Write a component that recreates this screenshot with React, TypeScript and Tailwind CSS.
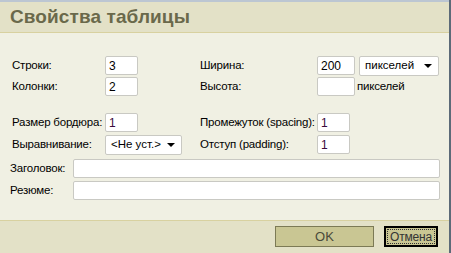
import React from "react";

function Field({ value = "", w = "w-[33px]", purple = false }: { value?: string; w?: string; purple?: boolean }) {
  return (
    <div
      className={`${w} h-[19px] bg-white border border-[#c9c9c3] rounded-[2px] flex items-center px-[3px] text-[12px] ${
        purple ? "text-[#3a0a3a]" : "text-black"
      }`}
    >
      {value}
    </div>
  );
}

function Select({ value, w }: { value: string; w: string }) {
  return (
    <div className={`${w} h-[20px] bg-white border border-[#c9c9c3] rounded-[2px] flex items-center justify-between pl-[5px] pr-[6px] text-[11.5px] text-black whitespace-nowrap`}>
      <span>{value}</span>
      <span className="w-0 h-0 border-l-[4px] border-r-[4px] border-t-[4px] border-l-transparent border-r-transparent border-t-black" />
    </div>
  );
}

const label = "text-[11.5px] whitespace-nowrap tracking-[-0.2px]";

export default function App() {
  return (
    <div className="w-[451px] h-[253px] flex bg-[#f0f0e3] text-black" style={{ fontFamily: "'Liberation Sans', Arial, sans-serif" }}>
      <div className="flex-1 flex flex-col">
        {/* верхняя полоска окна */}
        <div className="h-[2px] bg-[#bcc6d2]" />
        <div className="h-[31px] bg-[#e3e1c7] border-b border-[#d8d1a0] flex items-center pl-[10px]">
          <h1 className="text-[19px] font-bold text-[#6a694b] tracking-[0.1px]">Свойства таблицы</h1>
        </div>

        <main className="flex-1 flex flex-col pt-[23px]">
          <div className="flex">
            <div className="flex flex-col gap-[2px] pl-[12px] w-[200px]">
              <div className="flex items-center h-[19px]">
                <span className={`w-[93px] ${label}`}>Строки:</span>
                <Field value="3" />
              </div>
              <div className="flex items-center h-[19px]">
                <span className={`w-[93px] ${label}`}>Колонки:</span>
                <Field value="2" />
              </div>
              <div className="flex items-center h-[19px] mt-[15px]">
                <span className={`w-[93px] ${label}`}>Размер бордюра:</span>
                <Field value="1" purple />
              </div>
              <div className="flex items-center h-[19px] mt-[1px]">
                <span className={`w-[93px] ${label}`}>Выравнивание:</span>
                <Select value="<Не уст.>" w="w-[77px]" />
              </div>
            </div>
            <div className="flex flex-col gap-[2px]">
              <div className="flex items-center h-[19px]">
                <span className={`w-[117px] ${label}`}>Ширина:</span>
                <Field value="200" w="w-[38px]" />
                <div className="ml-[4px]">
                  <Select value="пикселей" w="w-[80px]" />
                </div>
              </div>
              <div className="flex items-center h-[19px]">
                <span className={`w-[117px] ${label}`}>Высота:</span>
                <Field w="w-[38px]" />
                <span className={`ml-[2px] ${label}`}>пикселей</span>
              </div>
              <div className="flex items-center h-[19px] mt-[15px]">
                <span className={`w-[117px] ${label}`}>Промежуток (spacing):</span>
                <Field value="1" purple />
              </div>
              <div className="flex items-center h-[19px] mt-[1px]">
                <span className={`w-[117px] ${label}`}>Отступ (padding):</span>
                <Field value="1" purple />
              </div>
            </div>
          </div>

          <div className="flex flex-col gap-[3px] pl-[10px] pr-[9px] mt-[5px]">
            <div className="flex items-center h-[19px]">
              <span className={`w-[63px] ${label}`}>Заголовок:</span>
              <Field w="flex-1" />
            </div>
            <div className="flex items-center h-[19px]">
              <span className={`w-[63px] ${label}`}>Резюме:</span>
              <Field w="flex-1" />
            </div>
          </div>
        </main>

        <footer className="h-[33px] bg-[#e3e1c7] border-t border-[#d8d1a0] flex items-start justify-end pt-[5px] pr-[11px] gap-[10px]">
          <button className="w-[99px] h-[21px] bg-[#c9c693] border border-[#7c7a55] text-[13px] text-[#4a4a3a]">OK</button>
          <button className="w-[54px] h-[21px] bg-[#c9c693] border-2 border-black p-[1px] text-[12px] text-[#333]">
            <span className="w-full h-full flex items-center justify-center border border-dotted border-[#333] tracking-[-0.2px]">Отмена</span>
          </button>
        </footer>
      </div>
      <div className="w-[2px] bg-[#5c6a78]" />
    </div>
  );
}
